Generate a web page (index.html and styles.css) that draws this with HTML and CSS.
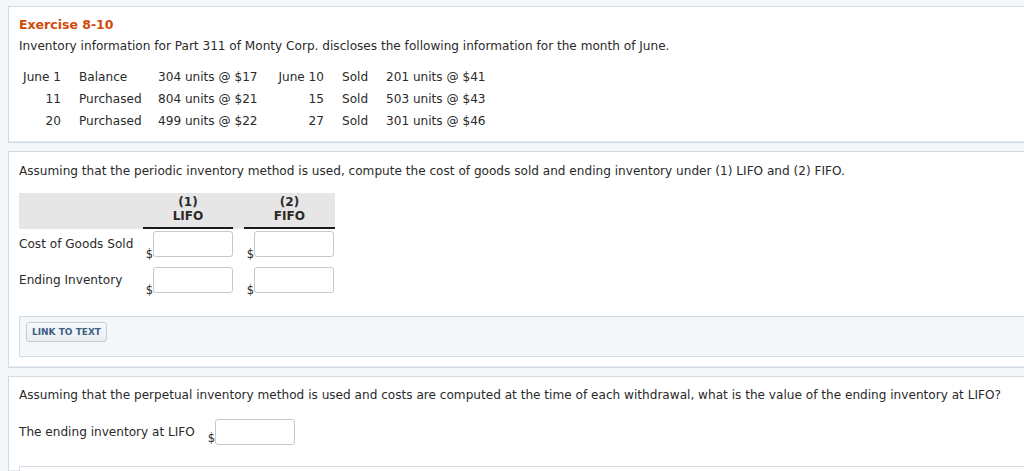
FILE: index.html
```html
<!DOCTYPE html>
<html>
<head>
<meta charset="utf-8">
<link rel="stylesheet" href="styles.css">
</head>
<body>
<div class="page">
  <section class="card card-intro">
    <h1 class="title">Exercise 8-10</h1>
    <p class="text">Inventory information for Part 311 of Monty Corp. discloses the following information for the month of June.</p>
    <div class="data">
      <span class="num">June 1</span><span class="pad">Balance</span><span>304 units @ $17</span><span class="num">June 10</span><span class="pad">Sold</span><span>201 units @ $41</span>
      <span class="num">11</span><span class="pad">Purchased</span><span>804 units @ $21</span><span class="num">15</span><span class="pad">Sold</span><span>503 units @ $43</span>
      <span class="num">20</span><span class="pad">Purchased</span><span>499 units @ $22</span><span class="num">27</span><span class="pad">Sold</span><span>301 units @ $46</span>
    </div>
  </section>

  <section class="card card-periodic">
    <p class="text">Assuming that the periodic inventory method is used, compute the cost of goods sold and ending inventory under (1) LIFO and (2) FIFO.</p>
    <div class="answers">
      <div class="head head-label"></div>
      <div class="head head-col">(1)<br>LIFO</div>
      <div class="head head-gap"></div>
      <div class="head head-col">(2)<br>FIFO</div>

      <div class="label">Cost of Goods Sold</div>
      <div class="cell"><span class="dollar">$</span><span class="field"></span></div>
      <div></div>
      <div class="cell"><span class="dollar">$</span><span class="field"></span></div>

      <div class="label">Ending Inventory</div>
      <div class="cell"><span class="dollar">$</span><span class="field"></span></div>
      <div></div>
      <div class="cell"><span class="dollar">$</span><span class="field"></span></div>
    </div>
    <div class="links">
      <span class="btn">LINK TO TEXT</span>
    </div>
  </section>

  <section class="card card-perpetual">
    <p class="text">Assuming that the perpetual inventory method is used and costs are computed at the time of each withdrawal, what is the value of the ending inventory at LIFO?</p>
    <div class="single">
      <span class="label">The ending inventory at LIFO</span>
      <span class="cell"><span class="dollar">$</span><span class="field"></span></span>
    </div>
    <div class="links links-bottom"></div>
  </section>
</div>
</body>
</html>
```

FILE: styles.css
```css
html, body {
  margin: 0;
  padding: 0;
  background: #f4f7fa;
  overflow: hidden;
  height: 471px;
}
body {
  font-family: "DejaVu Sans", Verdana, sans-serif;
  font-size: 12.1px;
  color: #2a2a2a;
}
.page {
  width: 1050px;
  padding: 6px 0 0 8px;
}
.card {
  background: #fff;
  border: 1px solid #d3dae4;
  border-right: none;
  padding: 0 0 0 10px;
  margin-bottom: 8px;
  box-shadow: inset 0 -1px 0 #e6ebf1;
  box-sizing: border-box;
}
.card-intro {
  padding-top: 10px;
  height: 137px;
}
.title {
  margin: 0;
  font-size: 12.5px;
  font-weight: bold;
  color: #d2490a;
  line-height: 16px;
}
.text {
  margin: 5px 0 0;
  line-height: 16px;
}
.data {
  display: grid;
  grid-template-columns: 42px 97px 119px 47px 62px auto;
  grid-auto-rows: 22px;
  align-items: center;
  margin-top: 12px;
}
.data .num {
  text-align: right;
}
.data .pad {
  padding-left: 18px;
}
.card-periodic {
  height: 217px;
  padding-top: 11px;
}
.card-periodic .text {
  margin: 0;
}
.answers {
  display: grid;
  grid-template-columns: 124px 90px 11px 91px;
  grid-template-rows: 36px 36px 36px;
  margin-top: 14px;
}
.head {
  background: #e6e6e6;
}
.head-col {
  font-weight: bold;
  text-align: center;
  line-height: 14px;
  padding-top: 2px;
  box-sizing: border-box;
  border-bottom: 2px solid #1a1a1a;
}
.label {
  padding-top: 8px;
}
.cell {
  display: flex;
  align-items: flex-start;
  padding-top: 2px;
}
.dollar {
  align-self: flex-end;
  width: 10px;
  text-align: right;
  line-height: 12px;
  font-size: 11.5px;
  margin-bottom: 5px;
}
.field {
  display: block;
  width: 80px;
  height: 26px;
  box-sizing: border-box;
  border: 1px solid #c8c8c8;
  border-radius: 3px;
  background: #fff;
}
.links {
  margin-top: 15px;
  background: #f4f7fa;
  border: 1px solid #d3dae4;
  border-right: none;
  padding: 5px 0 0 6px;
  box-sizing: border-box;
  height: 41px;
}
.btn {
  display: inline-block;
  height: 20px;
  line-height: 18px;
  box-sizing: border-box;
  padding: 0 5px;
  border: 1px solid #c6cdd6;
  border-radius: 3px;
  background: linear-gradient(#f7f9fb, #e9edf1);
  font-size: 9px;
  font-weight: bold;
  color: #3f5f86;
}
.card-perpetual {
  padding-top: 10px;
  height: 96px;
  margin-bottom: 0;
  overflow: hidden;
}
.card-perpetual .text {
  margin: 0;
}
.single {
  display: flex;
  align-items: flex-start;
  margin-top: 16px;
}
.single .label {
  padding-top: 6px;
  width: 186px;
}
.single .cell {
  padding-top: 0;
}
.single .dollar {
  margin-bottom: 1px;
}
.links-bottom {
  margin-top: 21px;
  background: #fff;
}
```
